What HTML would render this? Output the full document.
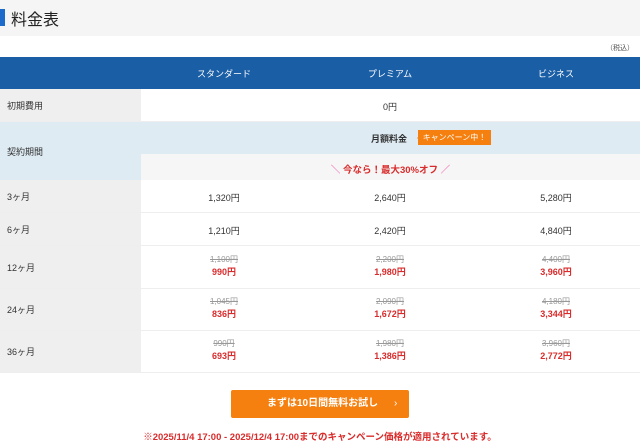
<!DOCTYPE html>
<html><head><meta charset="utf-8"><style>
*{margin:0;padding:0;box-sizing:border-box}
body{width:640px;height:446px;background:#fff;font-family:"Liberation Sans","Noto Sans CJK JP",sans-serif;color:#333;position:relative;overflow:hidden;font-size:9px}
.top{position:absolute;left:0;top:0;width:640px;height:36px;background:#f5f5f5}
.bar{position:absolute;left:0;top:9px;width:5px;height:17px;background:#1c6ac9}
.title{position:absolute;left:11px;top:6px;font-size:16px;color:#222}
.tax{position:absolute;right:6px;top:43px;font-size:7px;color:#555}
.row{position:absolute;left:0;width:640px;border-bottom:1px solid #eee}
.lab{position:absolute;left:0;top:0;bottom:0;width:141px;background:#efefef;padding-left:7px;display:flex;align-items:center;font-size:9px;color:#333}
.c{position:absolute;width:166px;text-align:center;font-size:9px}
.old{color:#999;text-decoration:line-through;font-size:8px}
.new{color:#d92b2b;font-weight:bold;font-size:9px}
</style></head><body>
<div class="top"></div><div class="bar"></div><div class="title">料金表</div>
<div class="tax">（税込）</div>
<div style="position:absolute;left:0;top:57px;width:640px;height:32px;background:#1a5ea6;color:#fff;font-size:10px">
<div class="c" style="left:141px;top:10px">スタンダード</div>
<div class="c" style="left:307px;top:10px">プレミアム</div>
<div class="c" style="left:473px;top:10px">ビジネス</div></div>
<div class="row" style="top:89px;height:33px"><div class="lab">初期費用</div><div class="c" style="left:307px;top:11px">0円</div></div>
<div class="row" style="top:122px;height:58px;border:0"><div class="lab" style="background:#deebf3">契約期間</div>
<div style="position:absolute;left:141px;top:0;width:499px;height:32px;background:#deebf3"></div>
<div style="position:absolute;left:141px;top:32px;width:499px;height:26px;background:#f6f6f6"></div>
<div style="position:absolute;left:371px;top:10px;font-size:9px;font-weight:bold">月額料金</div>
<div style="position:absolute;left:418px;top:8px;width:73px;height:15px;background:#f5800f;color:#fff;font-size:8px;text-align:center;line-height:15px">キャンペーン中！</div>
<div style="position:absolute;left:414px;top:13px;border:3px solid transparent;border-right:4px solid #f5800f;width:0;height:0"></div>
<div style="position:absolute;left:0;width:640px;top:40px;text-align:center;color:#d92b2b;font-weight:bold;font-size:9.5px;padding-left:141px"><span style="color:#e49;font-weight:normal">＼</span> 今なら！最大30%オフ <span style="color:#e49;font-weight:normal">／</span></div></div>
<div class="row" style="top:180px;height:33px"><div class="lab">3ヶ月</div><div class="c" style="left:141px;top:11px">1,320円</div><div class="c" style="left:307px;top:11px">2,640円</div><div class="c" style="left:473px;top:11px">5,280円</div></div>
<div class="row" style="top:213px;height:33px"><div class="lab">6ヶ月</div><div class="c" style="left:141px;top:11px">1,210円</div><div class="c" style="left:307px;top:11px">2,420円</div><div class="c" style="left:473px;top:11px">4,840円</div></div>
<div class="row" style="top:246px;height:43px"><div class="lab">12ヶ月</div>
<div class="c" style="left:141px;top:8px"><div class="old">1,100円</div><div class="new">990円</div></div>
<div class="c" style="left:307px;top:8px"><div class="old">2,200円</div><div class="new">1,980円</div></div>
<div class="c" style="left:473px;top:8px"><div class="old">4,400円</div><div class="new">3,960円</div></div></div>
<div class="row" style="top:289px;height:42px"><div class="lab">24ヶ月</div>
<div class="c" style="left:141px;top:7px"><div class="old">1,045円</div><div class="new">836円</div></div>
<div class="c" style="left:307px;top:7px"><div class="old">2,090円</div><div class="new">1,672円</div></div>
<div class="c" style="left:473px;top:7px"><div class="old">4,180円</div><div class="new">3,344円</div></div></div>
<div class="row" style="top:331px;height:42px"><div class="lab">36ヶ月</div>
<div class="c" style="left:141px;top:7px"><div class="old">990円</div><div class="new">693円</div></div>
<div class="c" style="left:307px;top:7px"><div class="old">1,980円</div><div class="new">1,386円</div></div>
<div class="c" style="left:473px;top:7px"><div class="old">3,960円</div><div class="new">2,772円</div></div></div>
<div style="position:absolute;left:231px;top:390px;width:178px;height:28px;background:#f5800f;border-radius:2px;color:#fff;font-weight:bold;font-size:10px;line-height:28px;padding-left:36px">まずは10日間無料お試し<span style="position:absolute;left:163px;font-weight:normal">›</span></div>
<div style="position:absolute;left:0;width:640px;top:429px;text-align:center;color:#d92b2b;font-size:9.5px;font-weight:bold">※2025/11/4 17:00 - 2025/12/4 17:00までのキャンペーン価格が適用されています。</div>
</body></html>
